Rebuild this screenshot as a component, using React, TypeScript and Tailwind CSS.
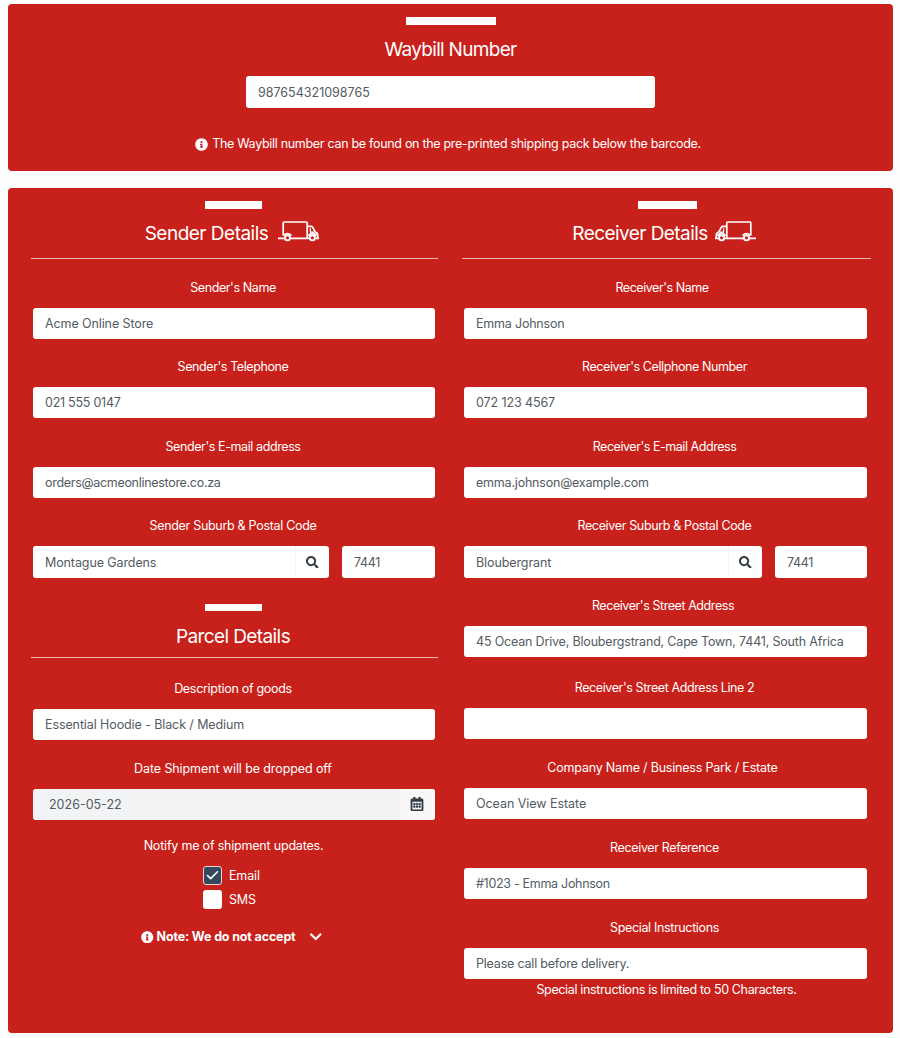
import type { ReactNode } from 'react'
import { Check } from 'lucide-react'
import { FaChevronDown, FaInfoCircle, FaRegCalendarAlt, FaSearch } from 'react-icons/fa'

const inputClass =
  'block h-[31px] w-full min-w-0 rounded-[3px] bg-white px-3 text-[12.5px] text-[#535b63] outline-none'

interface FieldProps {
  label: string
  value?: string
  labelClass?: string
  valueClass?: string
  children?: ReactNode
}

/** Centered label with a text input (or custom control) below it */
function Field({ label, value = '', labelClass = 'tracking-[-0.4px]', valueClass = '', children }: FieldProps) {
  return (
    <label className="block">
      <span className="mb-[10px] block h-5 pr-[2px] text-center text-[12.5px] leading-5">
        <span className={labelClass}>{label}</span>
      </span>
      {children ?? <input className={`${inputClass} ${valueClass}`} defaultValue={value} />}
    </label>
  )
}

function SuburbInput({ suburb, className }: { suburb: string; className: string }) {
  return (
    <span className={`grid ${className}`}>
      <span className="flex h-8 overflow-hidden rounded-[3px] bg-white">
        <input className={`${inputClass} h-8! flex-1 tracking-[-0.1px]`} defaultValue={suburb} />
        <span className="flex w-[34px] items-center justify-center border-l border-[#f5f5f5] text-[#343c44]">
          <FaSearch size={12.5} />
        </span>
      </span>
      <input className={`${inputClass} h-8! tracking-[-0.3px]`} defaultValue="7441" />
    </span>
  )
}

/** Small delivery truck, drawn facing right */
function Truck({ className = '' }: { className?: string }) {
  return (
    <svg
      className={className}
      width="42"
      height="22"
      viewBox="0 0 42 22"
      fill="none"
      stroke="currentColor"
      strokeWidth="1.7"
      strokeLinejoin="round"
    >
      <path d="M0 18.4H6.4M5.2 15.5V3Q5.2 2 6.2 2H28.2Q29.2 2 29.2 3V18.4M12.6 18.4H31M37.6 18.4H41" />
      <path d="M29.5 6.4H33.2Q34.2 6.4 34.7 7.3L37.2 11.8L39.4 13.5L39.9 18" />
      <path d="M32.4 8.2V12.1H36.4" strokeWidth="1.2" />
      <path d="M30.5 15.8Q34.4 10.6 38.5 15.8" strokeWidth="2" />
      <circle cx="9.5" cy="17.8" r="2.6" strokeWidth="1.9" />
      <circle cx="34.4" cy="17.8" r="2.6" strokeWidth="1.9" />
      <path d="M5.4 15.5Q9.5 11.4 13.6 15.5" strokeWidth="1.5" />
    </svg>
  )
}

export default function App() {
  return (
    <main className="h-[1038px] w-[900px] bg-[#fdfdfd] pt-1 pl-2 font-['Inter','Liberation_Sans',sans-serif] text-white">
      <section className="flex h-[167px] w-[885px] flex-col items-center rounded-[4px] bg-[#c8211b] pt-[13px]">
        <div className="h-[8px] w-[90px] bg-white" />
        <h1 className="mt-[11px] text-[19px] leading-7 tracking-[-0.7px]">Waybill Number</h1>
        <input
          className={`${inputClass} mt-[12px] h-[32px]! w-[409px]! flex-none`}
          aria-label="Waybill number"
          defaultValue="987654321098765"
        />
        <p className="mt-[26px] flex items-center gap-1 pr-[5px] text-[12.5px] leading-5 tracking-[-0.3px]">
          <FaInfoCircle size={13} />
          <span>The Waybill number can be found on the pre-printed shipping pack below the barcode.</span>
        </p>
      </section>

      <section className="mt-[17px] flex h-[845px] w-[885px] gap-6 rounded-[4px] bg-[#c8211b] pt-[13px] pr-[22px] pl-[23px]">
        <div className="w-[407px]">
          <div className="mr-auto ml-[174px] h-2 w-[57px] bg-white" />
          <h2 className="mt-[11px] flex h-[37px] items-start justify-center gap-[10px] pr-1 text-[19px] leading-7 tracking-[-0.5px]">
            <span>Sender Details</span>
            <Truck />
          </h2>
          <hr className="mt-px border-t border-[#f3b7b3]" />

          <div className="mt-[19px] mr-[3px] ml-[2px] grid grid-rows-[79px_80px_79px_62px]">
            <Field label="Sender's Name" value="Acme Online Store" valueClass="tracking-[-0.1px]" />
            <Field label="Sender's Telephone" value="021 555 0147" valueClass="tracking-[-0.25px]" />
            <Field label="Sender's E-mail address" value="orders@acmeonlinestore.co.za" valueClass="tracking-[-0.3px]" />
            <Field label="Sender Suburb & Postal Code" labelClass="tracking-[-0.3px]">
              <SuburbInput suburb="Montague Gardens" className="grid-cols-[296px_93px] gap-[13px]" />
            </Field>
          </div>

          <div className="mr-auto ml-[174px] mt-[26px] h-[7px] w-[57px] bg-white" />
          <h2 className="mt-[12px] h-[34px] pr-[3px] text-center text-[19px] leading-7 tracking-[-0.6px]">Parcel Details</h2>
          <hr className="border-t border-[#f3b7b3]" />

          <div className="mt-[21px] mr-[3px] ml-[2px] grid grid-rows-[80px_61px]">
            <Field
              label="Description of goods"
              value="Essential Hoodie - Black / Medium"
              labelClass="tracking-[-0.3px]"
              valueClass="tracking-[-0.1px]"
            />
            <Field label="Date Shipment will be dropped off" labelClass="tracking-[-0.1px]">
              <span className="flex h-[31px] overflow-hidden rounded-[3px] bg-[#f2f3f4]">
                <input className={`${inputClass} flex-1 bg-[#f2f3f4]! pl-4!`} defaultValue="2026-05-22" readOnly />
                <span className="flex w-[35px] items-center justify-center bg-[#f8f8f8] pr-px pb-px text-[#343c44]">
                  <FaRegCalendarAlt size={14} stroke="currentColor" strokeWidth={18} />
                </span>
              </span>
            </Field>
          </div>

          <p className="mt-[16px] pr-[2px] text-center text-[12.5px] leading-5 tracking-[-0.2px]">Notify me of shipment updates.</p>
          <div className="mt-[10px] ml-[172px] flex flex-col gap-[5px] text-[12.5px] leading-[19px] tracking-[-0.15px]">
            <label className="flex items-center gap-[7px]">
              <span className="flex size-[19px] flex-none items-center justify-center rounded-[3px] border border-[#ead7d6] bg-[#34495e]">
                <Check size={15} strokeWidth={2.6} />
              </span>
              Email
            </label>
            <label className="flex items-center gap-[7px]">
              <span className="size-[19px] flex-none rounded-[3px] bg-white" />
              SMS
            </label>
          </div>
          <div className="mt-[18px] ml-[110px] flex items-center text-[12.5px] leading-5 font-bold tracking-[-0.15px]">
            <FaInfoCircle size={12.5} />
            <span className="ml-[3px]">Note: We do not accept</span>
            <FaChevronDown className="ml-[13px]" size={13.5} />
          </div>
        </div>

        <div className="w-[409px]">
          <div className="mr-auto ml-[176px] h-2 w-[59px] bg-white" />
          <h2 className="mt-[11px] flex h-[37px] items-start justify-center gap-[6px] pr-[5px] text-[19px] leading-7 tracking-[-0.57px]">
            <span>Receiver Details</span>
            <Truck className="-scale-x-100" />
          </h2>
          <hr className="mt-px border-t border-[#f3b7b3]" />

          <div className="mt-[19px] mr-[4px] ml-[2px] grid grid-rows-[79px_80px_79px_80px_82px_80px_80px_80px_61px]">
            <Field label="Receiver's Name" value="Emma Johnson" labelClass="pr-[5px] tracking-[-0.45px]" valueClass="tracking-[-0.2px]" />
            <Field label="Receiver's Cellphone Number" value="072 123 4567" valueClass="tracking-[-0.1px]" />
            <Field
              label="Receiver's E-mail Address"
              value="emma.johnson@example.com"
              labelClass="tracking-[-0.45px]"
              valueClass="tracking-[-0.2px]"
            />
            <Field label="Receiver Suburb & Postal Code" labelClass="tracking-[-0.35px]">
              <SuburbInput suburb="Bloubergrant" className="grid-cols-[298px_92px] gap-[13px]" />
            </Field>
            <Field
              label="Receiver's Street Address"
              value="45 Ocean Drive, Bloubergstrand, Cape Town, 7441, South Africa"
              labelClass="pr-[3px] tracking-[-0.43px]"
              valueClass="tracking-[-0.18px]"
            />
            <Field label="Receiver's Street Address Line 2" />
            <Field
              label="Company Name / Business Park / Estate"
              value="Ocean View Estate"
              labelClass="pr-[4px] tracking-[-0.2px]"
              valueClass="tracking-[-0.05px]"
            />
            <Field
              label="Receiver Reference"
              value="#1023 - Emma Johnson"
              labelClass="tracking-[-0.35px]"
              valueClass="tracking-[-0.3px]"
            />
            <Field
              label="Special Instructions"
              value="Please call before delivery."
              labelClass="tracking-[-0.35px]"
              valueClass="tracking-[-0.2px]"
            />
          </div>
          <p className="mt-px text-center text-[12.5px] leading-5 tracking-[-0.35px]">
            Special instructions is limited to 50 Characters.
          </p>
        </div>
      </section>
    </main>
  )
}
